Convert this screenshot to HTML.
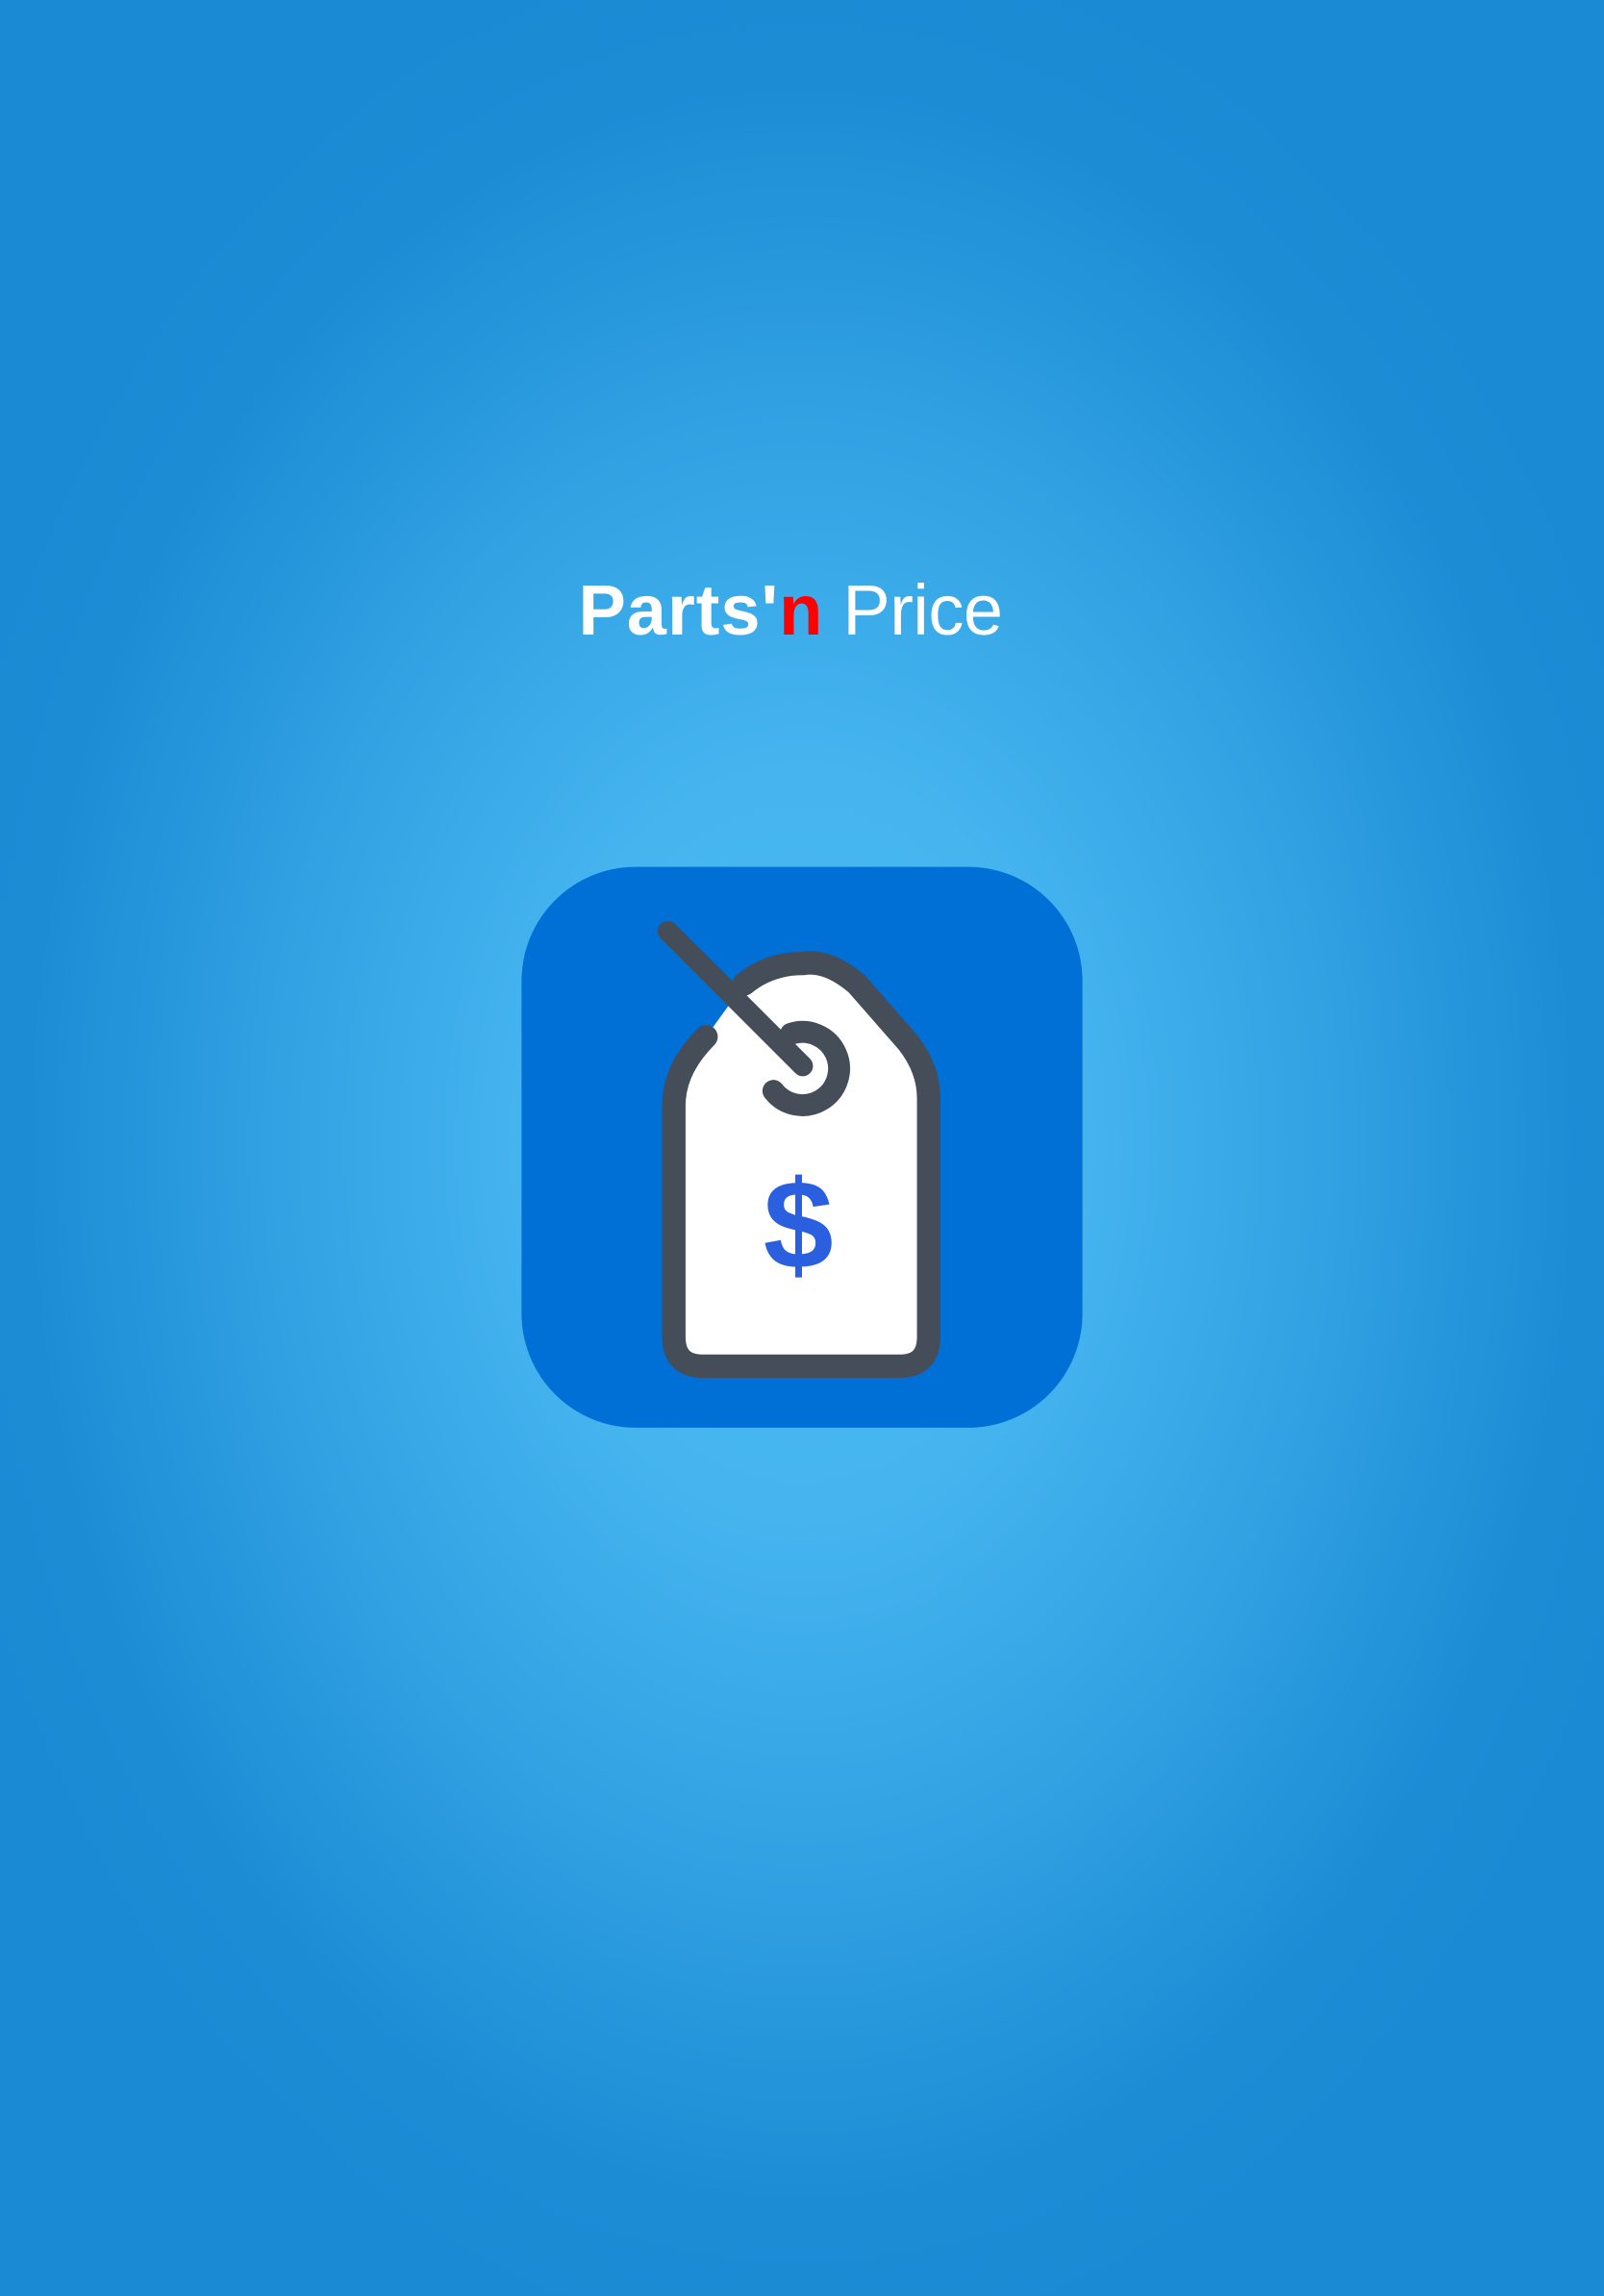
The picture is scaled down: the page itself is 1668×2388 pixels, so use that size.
<!DOCTYPE html>
<html><head><meta charset="utf-8"><style>
html,body{margin:0;padding:0}
body{width:1668px;height:2388px;overflow:hidden;position:relative;
background:radial-gradient(ellipse 950px 1300px at 834px 1190px,#4dbdf3 0%,#45b4ef 30%,#30a0e2 60%,#1c8cd5 85%,#1a8ad4 100%);}
.t{position:absolute;top:592px;left:-12px;width:1668px;text-align:center;font-family:"Liberation Sans",sans-serif;font-size:74px;color:#fff;letter-spacing:-0.5px}
.t b{font-weight:700;letter-spacing:1px}
svg{position:absolute;left:0;top:0}
</style></head><body>
<div class="t"><b>Parts'<span style="color:#f00">n</span></b> Price</div>
<svg width="1668" height="2388" viewBox="0 0 1095 1568">
<rect x="356" y="592" width="383" height="383" rx="78" fill="#006fd6"/>
<path d="M482 708 Q460 730 460 755 L460 913 Q460 933 480 933 L614 933 Q634 933 634 913 L634 750 Q634 730 620 712 L585 672 Q565 655 548 658 Q525 658 508 672 Z" fill="#fff" stroke="none"/>
<path d="M482 708 Q460 730 460 755 L460 913 Q460 933 480 933 L614 933 Q634 933 634 913 L634 750 Q634 730 620 712 L585 672 Q565 655 548 658 Q525 658 508 672" fill="none" stroke="#454d59" stroke-width="16" stroke-linecap="round"/>
<path d="M528 745 A25 25 0 1 0 540 706" fill="none" stroke="#454d59" stroke-width="15" stroke-linecap="round"/>
<line x1="456" y1="636" x2="548" y2="728" stroke="#454d59" stroke-width="14" stroke-linecap="round"/>
<text x="545" y="866" text-anchor="middle" font-family="Liberation Sans,sans-serif" font-weight="700" font-size="86" fill="#2a5fe0">$</text>
</svg>
</body></html>
